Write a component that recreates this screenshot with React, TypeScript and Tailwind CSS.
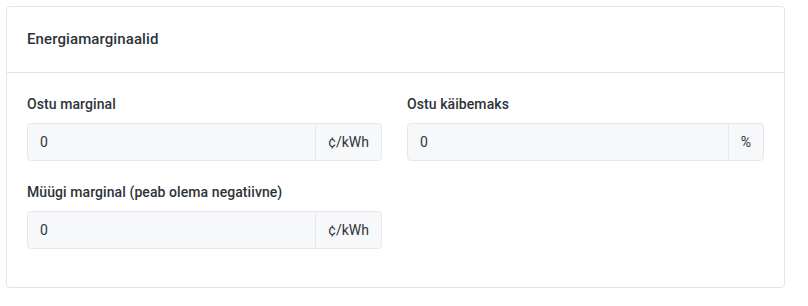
import React from "react";

function Field({ label, unit }: { label: string; unit: string }) {
  return (
    <div className="flex flex-col">
      <label className="mb-[9px] text-[14px] leading-5 font-medium tracking-[0.08px] text-[#2d333a]">{label}</label>
      <div className="flex h-[38px] rounded-[4px] border border-[#e6e8eb] bg-[#f7f8fa]">
        <div className="flex flex-1 items-center pl-3 text-[14px] text-[#2d333a]">0</div>
        <div className="flex items-center border-l border-[#e6e8eb] px-3 text-[14px] text-[#2d333a]">{unit}</div>
      </div>
    </div>
  );
}

export default function App() {
  return (
    <div className="min-h-[306px] bg-white pl-[6px] pt-[6px]" style={{ fontFamily: "Roboto, 'Noto Sans', sans-serif" }}>
      <div className="w-[779px] rounded-[4px] border border-[#e3e5e8] bg-white">
        <div className="flex h-[66px] items-center border-b border-[#e3e5e8] px-5">
          <h2 className="text-[15px] font-medium tracking-[0.1px] text-[#2d333a]">Energiamarginaalid</h2>
        </div>
        <div className="grid grid-cols-[355px_1fr] gap-x-[25px] gap-y-[21px] px-5 pt-[21px] pb-[38px]">
          <Field label="Ostu marginal" unit="¢/kWh" />
          <Field label="Ostu käibemaks" unit="%" />
          <Field label="Müügi marginal (peab olema negatiivne)" unit="¢/kWh" />
        </div>
      </div>
    </div>
  );
}
